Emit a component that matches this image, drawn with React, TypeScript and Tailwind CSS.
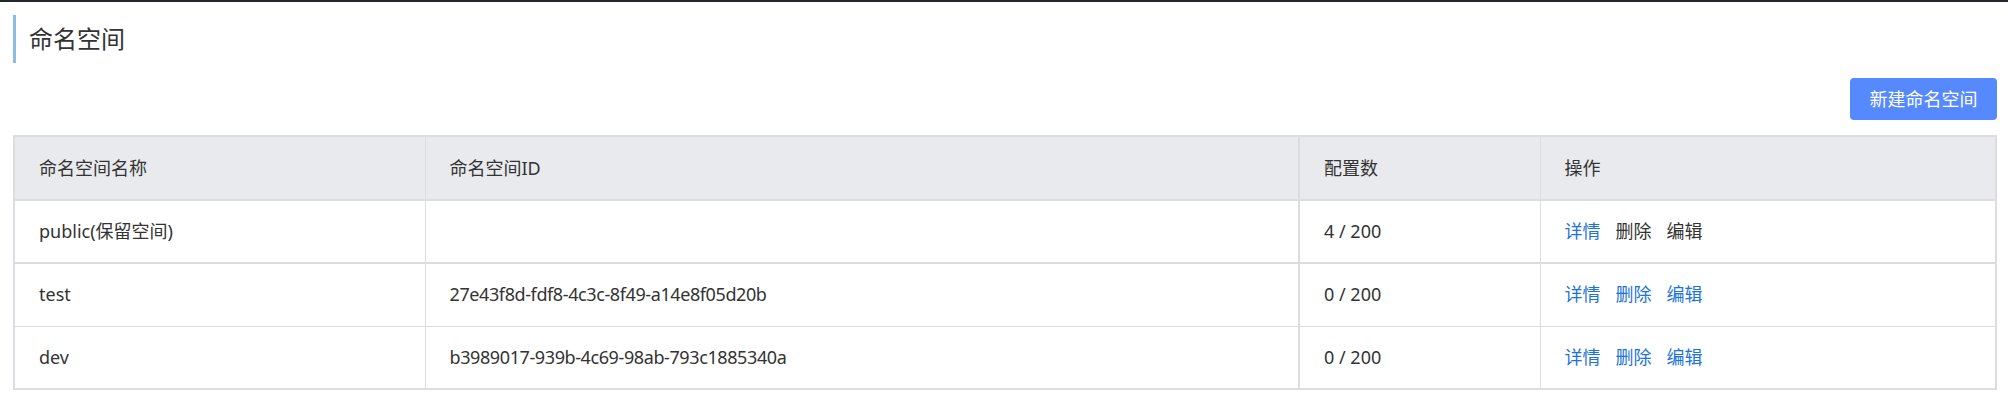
import React from "react";

interface Namespace {
  name: string;
  id: string;
  count: string;
  reserved?: boolean;
}

const rows: Namespace[] = [
  { name: "public(保留空间)", id: "", count: "4 / 200", reserved: true },
  { name: "test", id: "27e43f8d-fdf8-4c3c-8f49-a14e8f05d20b", count: "0 / 200" },
  { name: "dev", id: "b3989017-939b-4c69-98ab-793c1885340a", count: "0 / 200" },
];

const font = { fontFamily: '"Noto Sans", "Noto Sans CJK SC", sans-serif' };

const App: React.FC = () => {
  return (
    <div className="min-h-[418px] bg-white text-[#333]" style={font}>
      <div className="h-[2px] bg-[#25272c]" />
      <div className="pl-[13px] pr-[11px]">
        <div className="mt-[13px] flex h-[48px] items-center border-l-[3px] border-[#8dbbe6] pl-[13px]">
          <h1 className="text-[24px] font-normal leading-none text-[#333]">命名空间</h1>
        </div>

        <div className="mt-[15px] flex justify-end">
          <button className="h-[42px] w-[147px] rounded-[4px] bg-[#5689fe] text-[18px] text-white">
            新建命名空间
          </button>
        </div>

        <table className="mt-[15px] w-full table-fixed border-collapse border-2 border-[#dcdce1] text-[18px]">
          <colgroup>
            <col className="w-[411px]" />
            <col className="w-[874px]" />
            <col className="w-[241px]" />
            <col />
          </colgroup>
          <thead>
            <tr className="h-[64px] border-b-2 border-[#dcdce1] bg-[#e9eaee]">
              <th className="border-r border-[#dcdce1] pl-[24px] text-left font-normal">命名空间名称</th>
              <th className="border-r-2 border-[#dcdce1] pl-[24px] text-left font-normal">命名空间ID</th>
              <th className="border-r border-[#dcdce1] pl-[24px] text-left font-normal">配置数</th>
              <th className="pl-[24px] text-left font-normal">操作</th>
            </tr>
          </thead>
          <tbody>
            {rows.map((row, index) => (
              <tr
                key={row.name}
                className={
                  index === 0
                    ? "h-[63px] border-b-2 border-[#dcdce1]"
                    : "h-[63px] border-b border-[#dcdce1]"
                }
              >
                <td className="border-r border-[#dcdce1] pl-[24px]">{row.name}</td>
                <td className="border-r-2 border-[#dcdce1] pl-[24px] tracking-[-0.4px]">{row.id}</td>
                <td className="border-r border-[#dcdce1] pl-[24px]">{row.count}</td>
                <td className="pl-[24px]">
                  <div className="flex gap-[15px]">
                    <a className="cursor-pointer text-[#1d73d9]">详情</a>
                    <a className={row.reserved ? "cursor-pointer text-[#333]" : "cursor-pointer text-[#1d73d9]"}>删除</a>
                    <a className={row.reserved ? "cursor-pointer text-[#333]" : "cursor-pointer text-[#1d73d9]"}>编辑</a>
                  </div>
                </td>
              </tr>
            ))}
          </tbody>
        </table>
      </div>
    </div>
  );
};

export default App;
